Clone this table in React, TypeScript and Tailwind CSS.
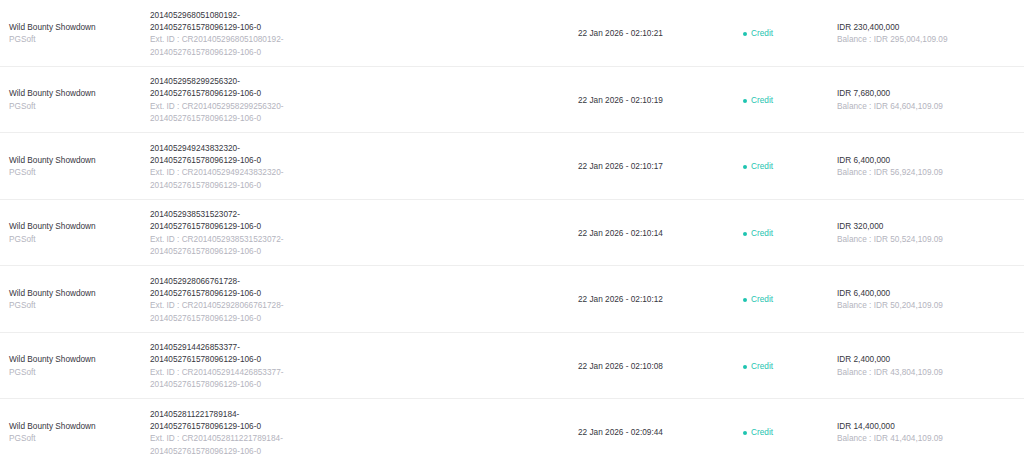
const rows = [
  { a: '2014052968051080192', time: '02:10:21', amt: '230,400,000', bal: '295,004,109.09' },
  { a: '2014052958299256320', time: '02:10:19', amt: '7,680,000', bal: '64,604,109.09' },
  { a: '2014052949243832320', time: '02:10:17', amt: '6,400,000', bal: '56,924,109.09' },
  { a: '2014052938531523072', time: '02:10:14', amt: '320,000', bal: '50,524,109.09' },
  { a: '2014052928066761728', time: '02:10:12', amt: '6,400,000', bal: '50,204,109.09' },
  { a: '2014052914426853377', time: '02:10:08', amt: '2,400,000', bal: '43,804,109.09' },
  { a: '2014052811221789184', time: '02:09:44', amt: '14,400,000', bal: '41,404,109.09' },
];

const suffix = '2014052761578096129-106-0';

export default function App() {
  return (
    <div
      className="w-[1024px] h-[464px] overflow-hidden bg-white text-[8.25px] leading-[12.375px] text-[#363640]"
      style={{ fontFamily: '"Liberation Sans", Arial, sans-serif' }}
    >
      {rows.map((r, i) => (
        <div
          key={i}
          className="grid grid-cols-[150px_428px_164px_95px_1fr] items-center h-[66.5px] pt-[3px] border-b border-[#eeeeee]"
        >
          <div className="pl-[9px]">
            <div>Wild Bounty Showdown</div>
            <div className="text-[#b4b4be]">PGSoft</div>
          </div>
          <div>
            <div>{r.a}-</div>
            <div>{suffix}</div>
            <div className="text-[#b4b4be]">Ext. ID : CR{r.a}-</div>
            <div className="text-[#b4b4be]">{suffix}</div>
          </div>
          <div>22 Jan 2026 - {r.time}</div>
          <div className="flex items-center gap-[4px] pl-[1px] text-[#1ec4b0]">
            <span className="w-[4px] h-[4px] rounded-full bg-[#1ec4b0]" />
            Credit
          </div>
          <div>
            <div>IDR {r.amt}</div>
            <div className="text-[#b4b4be]">Balance : IDR {r.bal}</div>
          </div>
        </div>
      ))}
    </div>
  );
}
